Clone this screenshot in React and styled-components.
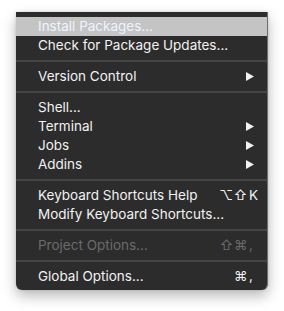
import React from "react";
import styled, { createGlobalStyle } from "styled-components";

const Global = createGlobalStyle`
  html, body { margin: 0; padding: 0; background: #ffffff; }
  body { font-family: Inter, "Liberation Sans", sans-serif; }
`;

const Page = styled.div`
  width: 284px;
  height: 311px;
  padding: 12px 0 0 16px;
  box-sizing: border-box;
`;

const Menu = styled.div`
  width: 252px;
  box-sizing: border-box;
  background: #2c2c2c;
  border-right: 1px solid #6f6f6f;
  border-radius: 0 0 6px 6px;
  padding: 5px 0 4px 0;
  box-shadow: 0 6px 14px rgba(0, 0, 0, 0.28), 0 0 3px rgba(0, 0, 0, 0.15);
  display: flex;
  flex-direction: column;
`;

const Row = styled.div`
  height: 19px;
  display: flex;
  align-items: center;
  padding: 0 8px 1px 22px;
  box-sizing: border-box;
  font-size: 13.5px;
  color: ${(p) => (p.$disabled ? "#6b6b6b" : p.$active ? "#eef4ff" : "#f2f2f2")};
  background: ${(p) => (p.$active ? "#c4c4c4" : "transparent")};
`;

const Label = styled.span`
  flex: 1;
  white-space: nowrap;
`;

const Shortcut = styled.span`
  display: flex;
  align-items: center;
  white-space: nowrap;
`;

const Mods = styled.span`
  letter-spacing: 0.5px;
  margin-right: 1px;
`;

const Key = styled.span`
  width: 10px;
  text-align: left;
`;

const Arrow = styled.svg`
  width: 8px;
  height: 9px;
  margin-right: 5px;
  margin-top: 1px;
  fill: #f2f2f2;
`;

const Separator = styled.div`
  height: 12px;
  display: flex;
  align-items: center;
  &::after {
    content: "";
    display: block;
    width: 100%;
    height: 2px;
    background: #454545;
  }
`;

const items = [
  { label: "Install Packages...", active: true },
  { label: "Check for Package Updates..." },
  { sep: true },
  { label: "Version Control", sub: true },
  { sep: true },
  { label: "Shell..." },
  { label: "Terminal", sub: true },
  { label: "Jobs", sub: true },
  { label: "Addins", sub: true },
  { sep: true },
  { label: "Keyboard Shortcuts Help", mods: "⌥⇧", key: "K" },
  { label: "Modify Keyboard Shortcuts..." },
  { sep: true },
  { label: "Project Options...", mods: "⇧⌘", key: ",", disabled: true },
  { sep: true },
  { label: "Global Options...", mods: "⌘", key: "," },
];

export default function App() {
  return (
    <>
      <Global />
      <Page>
        <Menu>
          {items.map((it, i) =>
            it.sep ? (
              <Separator key={i} />
            ) : (
              <Row key={i} $active={it.active} $disabled={it.disabled}>
                <Label>{it.label}</Label>
                {it.sub && (
                  <Arrow viewBox="0 0 8 9">
                    <polygon points="0,0 8,4.5 0,9" />
                  </Arrow>
                )}
                {it.key && (
                  <Shortcut>
                    <Mods>{it.mods}</Mods>
                    <Key>{it.key}</Key>
                  </Shortcut>
                )}
              </Row>
            )
          )}
        </Menu>
      </Page>
    </>
  );
}
